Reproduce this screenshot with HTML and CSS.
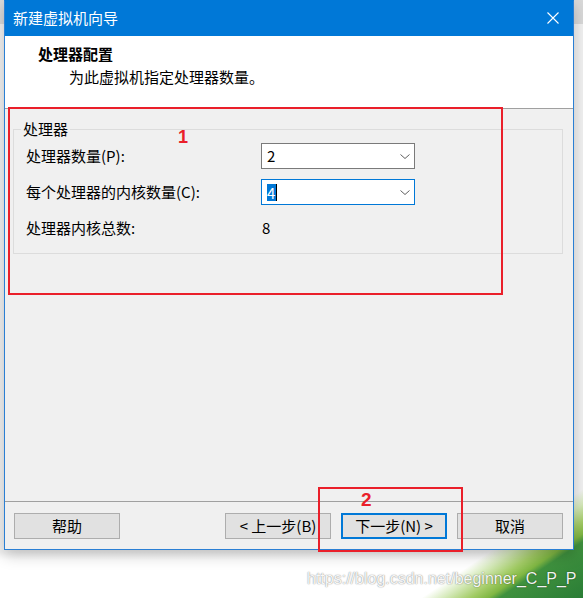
FILE: index.html
```html
<!DOCTYPE html>
<html lang="zh-CN">
<head>
<meta charset="utf-8">
<title>新建虚拟机向导</title>
<link rel="stylesheet" href="styles.css">
</head>
<body>
<div class="desktop">
  <div class="window">
    <div class="titlebar">
      <span class="title">新建虚拟机向导</span>
      <svg class="close" width="12" height="12" viewBox="0 0 12 12"><path d="M0.5 0.5 L11.5 11.5 M11.5 0.5 L0.5 11.5" stroke="#fff" stroke-width="1.1" fill="none"/></svg>
    </div>
    <div class="header">
      <div class="h-title">处理器配置</div>
      <div class="h-sub">为此虚拟机指定处理器数量。</div>
    </div>
    <div class="body">
      <fieldset class="group">
        <legend>处理器</legend>
        <div class="grid">
          <div class="label">处理器数量(P):</div>
          <div class="combo">
            <span class="val">2</span>
            <svg class="chev" width="10" height="5" viewBox="0 0 10 5"><polyline points="0.5,0.5 5,4.5 9.5,0.5" stroke="#606060" stroke-width="1" fill="none"/></svg>
          </div>
          <div class="label">每个处理器的内核数量(C):</div>
          <div class="combo focused">
            <span class="val sel">4</span><span class="caret"></span>
            <svg class="chev" width="10" height="5" viewBox="0 0 10 5"><polyline points="0.5,0.5 5,4.5 9.5,0.5" stroke="#606060" stroke-width="1" fill="none"/></svg>
          </div>
          <div class="label">处理器内核总数:</div>
          <div class="value">8</div>
        </div>
      </fieldset>
    </div>
    <div class="footer">
      <button class="btn">帮助</button>
      <div class="spacer"></div>
      <button class="btn">&lt; 上一步(B)</button>
      <button class="btn default">下一步(N) &gt;</button>
      <button class="btn">取消</button>
    </div>
  </div>
  <div class="anno anno1"></div>
  <div class="num num1">1</div>
  <div class="anno anno2"></div>
  <div class="num num2">2</div>
  <div class="watermark">https://blog.csdn.net/beginner_C_P_P</div>
</div>
</body>
</html>
```
FILE: styles.css
```css
* { box-sizing: border-box; }
html, body { margin: 0; padding: 0; }
body {
  font-family: "Noto Sans CJK SC", "Noto Sans", sans-serif;
  font-size: 15px;
  color: #000;
}
.desktop {
  position: relative;
  width: 583px;
  height: 598px;
  overflow: hidden;
  padding-left: 4px;
  background:
    linear-gradient(146deg, rgba(255,255,255,0) 0%, rgba(255,255,255,0) 89%, #d6eabb 90.5%, #a3cc66 92.3%, #80b743 93.5%, #3f913e 94.3%, #2a7d36 100%),
    linear-gradient(to bottom, #d9d9d9 0, #d9d9d9 24px, #f2f2f2 24px, #f2f2f2 552px, #ffffff 560px);
}
.window {
  width: 570px;
  height: 550px;
  border: 1px solid #2a7fd4;
  border-top-color: #0078d7;
  background: #f0f0f0;
  display: flex;
  flex-direction: column;
  box-shadow: 0 5px 14px rgba(0,0,0,0.22);
}
.titlebar {
  height: 35px;
  flex: none;
  background: #0078d7;
  display: flex;
  align-items: center;
  padding-left: 8px;
  color: #fff;
}
.title { line-height: 20px; margin-top: -1px; }
.close { margin-left: auto; margin-right: 14px; margin-top: -1px; }
.header {
  height: 73px;
  flex: none;
  background: #fff;
  border-bottom: 1px solid #a0a0a0;
  padding: 8px 0 0 33px;
}
.h-title { font-weight: bold; line-height: 20px; }
.h-sub { line-height: 20px; margin-top: 3px; padding-left: 31px; }
.body {
  flex: 1;
  padding: 10px 10px 0 8px;
}
.group {
  margin: 0;
  border: 1px solid #dcdcdc;
  padding: 4px 12px 12px 12px;
  min-width: 0;
}
.group legend {
  padding: 0 2px;
  margin-left: -5px;
  line-height: 20px;
}
.grid {
  display: grid;
  grid-template-columns: 235px 154px;
  grid-auto-rows: 26px;
  row-gap: 10px;
  align-items: center;
}
.label, .value { line-height: 20px; }
.combo {
  height: 26px;
  border: 1px solid #7a7a7a;
  background: #fff;
  display: flex;
  align-items: center;
  padding: 0 4px 0 5px;
}
.combo.focused { border-color: #0078d7; }
.val { line-height: 20px; }
.sel {
  background: #0078d7;
  color: #fff;
  line-height: 17px;
  padding: 0 1px 0 0;
}
.caret {
  width: 1px;
  height: 17px;
  background: #000;
}
.chev { margin-left: auto; margin-top: 1px; }
.value { padding-left: 1px; }
.footer {
  height: 48px;
  flex: none;
  border-top: 1px solid #a0a0a0;
  display: flex;
  align-items: flex-start;
  gap: 10px;
  padding: 11px 10px 0 9px;
}
.spacer { flex: 1; }
.btn {
  width: 106px;
  height: 26px;
  background: #e1e1e1;
  border: 1px solid #adadad;
  font-family: "Noto Sans CJK SC", "Noto Sans", sans-serif;
  font-size: 15px;
  line-height: 20px;
  color: #000;
  padding: 0;
  margin: 0;
}
.btn.default { border: 2px solid #0078d7; }
.anno {
  position: absolute;
  border: 2px solid #ea1f2a;
}
.anno1 { left: 8px; top: 107px; width: 495px; height: 188px; }
.anno2 { left: 318px; top: 487px; width: 145px; height: 65px; }
.num {
  position: absolute;
  font-family: "Liberation Sans", Arial, sans-serif;
  font-weight: bold;
  color: #ea1f2a;
}
.num1 { left: 178px; top: 128px; font-size: 18px; line-height: 18px; }
.num2 { left: 361px; top: 490px; font-size: 19px; line-height: 19px; }
.watermark {
  position: absolute;
  left: 307px;
  top: 570px;
  font-family: "Liberation Sans", Arial, sans-serif;
  font-size: 16px;
  line-height: 18px;
  color: rgba(255,255,255,0.95);
  text-shadow: 0 0 1px rgba(0,0,0,0.45), 0 0 2px rgba(0,0,0,0.2);
}
```
